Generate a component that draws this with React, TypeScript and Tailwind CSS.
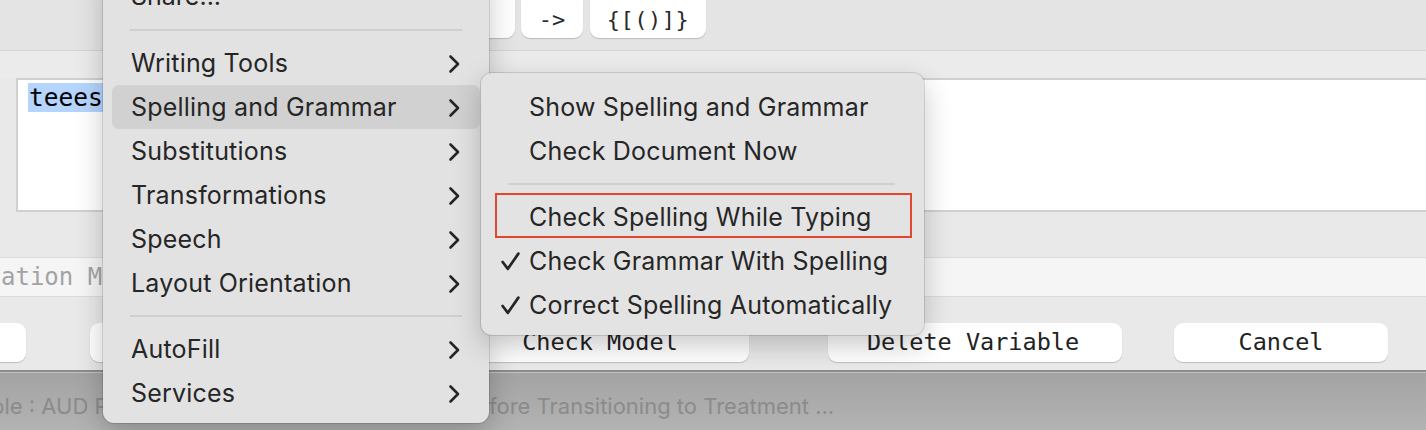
import React from "react";

const mono = { fontFamily: '"DejaVu Sans Mono", "Liberation Mono", monospace' };
const sans = { fontFamily: 'Inter, "Noto Sans", "Liberation Sans", sans-serif' };

function Chevron() {
  return (
    <svg width="14" height="20" viewBox="0 0 14 20" fill="none">
      <path d="M3.5 2.5 L11 10 L3.5 17.5" stroke="#262626" strokeWidth="2.6" strokeLinecap="round" strokeLinejoin="round" />
    </svg>
  );
}

function Check() {
  return (
    <svg width="21" height="21" viewBox="0 0 20 20" fill="none">
      <path d="M2.5 10.5 L7.5 17 L17.5 2.5" stroke="#262626" strokeWidth="2.6" strokeLinecap="round" strokeLinejoin="round" />
    </svg>
  );
}

function MenuItem({ label, active }: { label: string; active?: boolean }) {
  return (
    <div
      className={
        "mx-[9px] h-[44px] pl-[19px] pr-[19px] pt-[1px] flex items-center justify-between rounded-[7px] " +
        (active ? "bg-[#d1d1d1]" : "")
      }
    >
      <span className="text-[25px] text-[#262626] tracking-[0.2px]">{label}</span>
      <Chevron />
    </div>
  );
}

function SubItem({ label, checked }: { label: string; checked?: boolean }) {
  return (
    <div className="h-[44px] flex items-center pl-[19px] pt-[1px]">
      <span className="w-[29px] flex items-center">{checked ? <Check /> : null}</span>
      <span className="text-[25px] text-[#262626] tracking-[0.2px]">{label}</span>
    </div>
  );
}

export default function App() {
  return (
    <div className="relative w-[1426px] h-[430px] overflow-hidden bg-[#e9e9e9]" style={sans}>
      {/* Toolbar */}
      <div className="h-[51px] bg-[#e3e4e3] border-b border-[#d5d5d5] flex items-start pl-[420px]">
        <div className="w-[95px] h-[38px] bg-white rounded-b-[9px] shadow-[0_1px_1px_rgba(0,0,0,0.18)]" />
        <div
          className="ml-[6px] w-[62px] h-[38px] bg-white rounded-b-[9px] shadow-[0_1px_1px_rgba(0,0,0,0.18)] flex items-center justify-center text-[22px] text-[#2a2a2a]"
          style={mono}
        >
          -&gt;
        </div>
        <div
          className="ml-[7px] w-[116px] h-[38px] bg-white rounded-b-[9px] shadow-[0_1px_1px_rgba(0,0,0,0.18)] flex items-center justify-center text-[22px] text-[#2a2a2a] tracking-[0.5px]"
          style={mono}
        >
          {"{[()]}"}
        </div>
      </div>

      {/* band */}
      <div className="h-[27px] bg-[#ebebeb]" />

      {/* text area */}
      <div className="pl-[16px]">
        <div className="h-[134px] bg-white border-t-2 border-l-2 border-b-2 border-[#d0d0d0] pl-[10px] pt-[3px]">
          <span className="bg-[#b4d5fe] text-black text-[24.5px] leading-[30px] px-[1px]" style={mono}>
            teeest
          </span>
        </div>
      </div>

      {/* gap */}
      <div className="h-[45px] bg-[#e9e9e9]" />

      {/* field */}
      <div className="h-[40px] bg-[#f5f5f5] border-y border-[#dcdcdc] flex items-center">
        <span className="text-[24px] text-[#a3a3a3] pl-[1px]" style={mono}>
          ation Model
        </span>
      </div>

      {/* buttons row */}
      <div className="h-[73px] bg-[#e9e9e9] pt-[26px] flex items-start text-[23.5px] text-[#222]" style={mono}>
        <div className="w-[26px] h-[39px] bg-white rounded-r-[9px] shadow-[0_1px_1px_rgba(0,0,0,0.18)]" />
        <div className="ml-[64px] w-[300px] h-[39px] bg-white rounded-[9px] shadow-[0_1px_1px_rgba(0,0,0,0.18)]" />
        <div className="ml-[65px] w-[294px] h-[39px] bg-white rounded-[9px] shadow-[0_1px_1px_rgba(0,0,0,0.18)] flex items-center justify-center pr-[4px]">
          Check Model
        </div>
        <div className="ml-[79px] w-[294px] h-[39px] bg-white rounded-[9px] shadow-[0_1px_1px_rgba(0,0,0,0.18)] flex items-center justify-center pr-[4px]">
          Delete Variable
        </div>
        <div className="ml-[52px] w-[214px] h-[39px] bg-white rounded-[9px] shadow-[0_1px_1px_rgba(0,0,0,0.18)] flex items-center justify-center">
          Cancel
        </div>
      </div>

      {/* bottom */}
      <div className="h-[2px] bg-[#8c8c8c]" />
      <div className="h-[1px] bg-[#c4c4c4]" />
      <div className="h-[57px] bg-gradient-to-b from-[#a3a3a3] to-[#b3b3b3] flex items-center pt-[10px] text-[22px] text-[#8b8b8b] whitespace-nowrap">
        <div className="w-[489px] overflow-hidden shrink-0">
          <span className="block -ml-[9px]">ble : AUD Phase 1 Be</span>
        </div>
        <span>fore Transitioning to Treatment ...</span>
      </div>

      {/* Main context menu */}
      <div className="absolute left-[103px] top-[-33px] w-[386px] rounded-[11px] bg-[#e2e2e2] py-[8px] shadow-[0_0_0_1px_rgba(0,0,0,0.12),0_10px_28px_rgba(0,0,0,0.22)]">
        <div className="mx-[9px] h-[44px] pl-[19px] flex items-center">
          <span className="text-[25px] text-[#262626]">Share...</span>
        </div>
        <div className="h-[22px] flex items-center px-[27px]">
          <div className="h-[2px] w-full bg-[#cfcfcf]" />
        </div>
        <MenuItem label="Writing Tools" />
        <MenuItem label="Spelling and Grammar" active />
        <MenuItem label="Substitutions" />
        <MenuItem label="Transformations" />
        <MenuItem label="Speech" />
        <MenuItem label="Layout Orientation" />
        <div className="h-[22px] flex items-center px-[27px]">
          <div className="h-[2px] w-full bg-[#cfcfcf]" />
        </div>
        <MenuItem label="AutoFill" />
        <MenuItem label="Services" />
      </div>

      {/* Submenu */}
      <div className="absolute left-[481px] top-[73px] w-[443px] rounded-[11px] bg-[#e3e3e3] pt-[12px] pb-[8px] shadow-[0_0_0_1px_rgba(0,0,0,0.12),0_10px_28px_rgba(0,0,0,0.22)]">
        <SubItem label="Show Spelling and Grammar" />
        <SubItem label="Check Document Now" />
        <div className="h-[22px] flex items-center pl-[27px] pr-[29px]">
          <div className="h-[2px] w-full bg-[#cfcfcf]" />
        </div>
        <SubItem label="Check Spelling While Typing" />
        <SubItem label="Check Grammar With Spelling" checked />
        <SubItem label="Correct Spelling Automatically" checked />
        <div className="absolute left-[14px] top-[120px] w-[417px] h-[45px] border-2 border-[#e4472f]" />
      </div>
    </div>
  );
}
